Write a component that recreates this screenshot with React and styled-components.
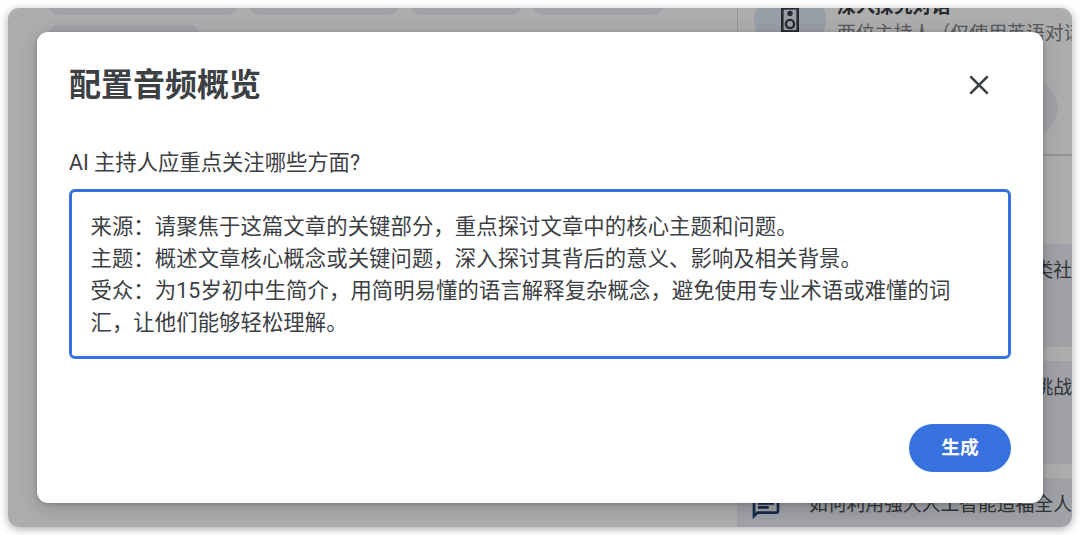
import React from "react";
import styled, { createGlobalStyle } from "styled-components";

const Global = createGlobalStyle`
  * { box-sizing: border-box; }
  body {
    margin: 0;
    background: #fff;
    font-family: Roboto, "Noto Sans CJK SC", sans-serif;
    color: #3c4043;
  }
`;

const Stage = styled.div`
  width: 1080px;
  height: 535px;
  padding: 8px;
  overflow: hidden;
`;

const Frame = styled.div`
  position: relative;
  width: 1064px;
  height: 519px;
  border-radius: 11px;
  box-shadow: 0 2px 9px rgba(0, 0, 0, 0.34);
`;

const Page = styled.div`
  display: flex;
  height: 100%;
  overflow: hidden;
  border-radius: 11px;
  background: #fff;
`;

const Main = styled.main`
  width: 729px;
  flex: none;
  padding-left: 40px;
  overflow: hidden;
`;

const ChipRow = styled.div`
  display: flex;
  gap: 11px;
  height: 43px;
  margin-top: ${(p) => p.$offset}px;
`;

const Chip = styled.div`
  width: ${(p) => p.$width}px;
  border-radius: 11px;
  background: #edeff7;
`;

const Side = styled.aside`
  width: 335px;
  flex: none;
  overflow: hidden;
  display: flex;
  flex-direction: column;
`;

const Audio = styled.section`
  height: 148px;
  flex: none;
  border-left: 1px solid #dadce0;
  border-bottom: 2px solid #dadce0;
`;

const AudioHead = styled.div`
  display: flex;
  gap: 11px;
  height: 72px;
  margin: -24px 0 0 16px;
`;

const Round = styled.div`
  display: flex;
  align-items: center;
  justify-content: center;
  width: 72px;
  height: 72px;
  flex: none;
  border-radius: 50%;
  background: #e1e9f8;
`;

const AudioText = styled.div`
  padding-top: 10px;
  white-space: nowrap;
  font-size: 18.9px;
  line-height: 26px;
`;

const AudioTitle = styled.div`
  font-weight: 700;
  color: #3c4043;
`;

const AudioNote = styled.div`
  padding-top: 1px;
  color: #80868b;
`;

const AudioAction = styled.div`
  width: 290px;
  height: 56px;
  margin: 24px 0 0 30px;
  border-radius: 28px;
  background: #edeff7;
`;

const Notes = styled.div`
  display: flex;
  flex-direction: column;
  gap: 13.5px;
  padding-top: 87.5px;
`;

const Note = styled.div`
  display: flex;
  justify-content: ${(p) => (p.$end ? "flex-end" : "flex-start")};
  gap: 27px;
  height: 103.5px;
  flex: none;
  padding: 14px 0 0 ${(p) => (p.$end ? 0 : 13)}px;
  background: #edeff7;
  white-space: nowrap;
  font-size: 18.8px;
  line-height: 27px;
  color: #4a4e52;

  svg {
    flex: none;
    margin-top: -2px;
  }
`;

const Scrim = styled.div`
  position: absolute;
  inset: 0;
  overflow: hidden;
  border-radius: 11px;
  background: rgba(0, 0, 0, 0.32);
`;

const Dialog = styled.section`
  position: absolute;
  left: 29px;
  top: 24px;
  width: 1006px;
  height: 471px;
  padding: 32px;
  display: flex;
  flex-direction: column;
  border-radius: 11px;
  background: #fff;
  box-shadow: 0 1px 4px rgba(0, 10, 8, 0.2), 0 5px 20px rgba(0, 10, 8, 0.18);
`;

const Header = styled.header`
  display: flex;
  align-items: center;
  justify-content: space-between;
  height: 43px;
  padding-right: 16px;
`;

const Title = styled.h1`
  margin: 0;
  font-size: 32px;
  line-height: 43px;
  font-weight: 700;
`;

const Close = styled.button`
  display: flex;
  margin-bottom: 1px;
  padding: 0;
  border: 0;
  background: none;
  color: #3c4043;
`;

const Label = styled.label`
  margin-top: 40px;
  font-size: 21.33px;
  line-height: 32px;
`;

const Field = styled.div`
  height: 170px;
  margin-top: 10px;
  padding: 19px 18.5px;
  border: 3px solid #3871e0;
  border-radius: 6px;
  font-size: 21.33px;
  line-height: 32px;
  letter-spacing: 0.1px;
  white-space: nowrap;
`;

const Footer = styled.footer`
  display: flex;
  justify-content: flex-end;
  margin-top: 65px;
`;

const Submit = styled.button`
  width: 102px;
  height: 48px;
  padding: 0;
  border: 0;
  border-radius: 24px;
  background: #3871e0;
  color: #fff;
  font: 700 18.67px/48px Roboto, "Noto Sans CJK SC", sans-serif;
`;

const SpeakerIcon = () => (
  <svg width="18" height="26" viewBox="0 0 18 26" fill="none" stroke="#3c4043">
    <rect x="1.3" y="1.3" width="15.4" height="23.2" strokeWidth="2.6" />
    <circle cx="9" cy="6.5" r="2.7" fill="#3c4043" stroke="none" />
    <circle cx="9" cy="17" r="4.1" strokeWidth="2.4" />
  </svg>
);

const ChatIcon = () => (
  <svg width="32" height="32" viewBox="0 0 24 24" fill="#1f3e72">
    <path d="M4 4h16v12H5.17L4 17.17V4m0-2c-1.1 0-1.99.9-1.99 2L2 22l4-4h14c1.1 0 2-.9 2-2V4c0-1.1-.9-2-2-2H4zm2 10h8v2H6v-2zm0-3h12v2H6V9zm0-3h12v2H6V6z" />
  </svg>
);

const CloseIcon = () => (
  <svg width="32" height="32" viewBox="0 0 32 32" fill="none" stroke="currentColor" strokeWidth="2.6">
    <path d="M7.3 7.3 24.7 24.7M24.7 7.3 7.3 24.7" />
  </svg>
);

const prompt = [
  "来源：请聚焦于这篇文章的关键部分，重点探讨文章中的核心主题和问题。",
  "主题：概述文章核心概念或关键问题，深入探讨其背后的意义、影响及相关背景。",
  "受众：为15岁初中生简介，用简明易懂的语言解释复杂概念，避免使用专业术语或难懂的词",
  "汇，让他们能够轻松理解。",
];

export default function App() {
  return (
    <Stage lang="zh-CN">
      <Global />
      <Frame>
        <Page>
          <Main>
            <ChipRow $offset={-36}>
              <Chip $width={190} />
              <Chip $width={150} />
              <Chip $width={112} />
              <Chip $width={131} />
            </ChipRow>
            <ChipRow $offset={10}>
              <Chip $width={152} />
            </ChipRow>
          </Main>
          <Side>
            <Audio>
              <AudioHead>
                <Round>
                  <SpeakerIcon />
                </Round>
                <AudioText>
                  <AudioTitle>深入探究对话</AudioTitle>
                  <AudioNote>两位主持人（仅使用英语对话）</AudioNote>
                </AudioText>
              </AudioHead>
              <AudioAction />
            </Audio>
            <Notes>
              <Note $end>类社</Note>
              <Note $end>挑战</Note>
              <Note>
                <ChatIcon />
                如何利用强大人工智能造福全人类
              </Note>
            </Notes>
          </Side>
        </Page>
        <Scrim>
          <Dialog>
            <Header>
              <Title>配置音频概览</Title>
              <Close aria-label="关闭">
                <CloseIcon />
              </Close>
            </Header>
            <Label>AI 主持人应重点关注哪些方面?</Label>
            <Field>
              {prompt.map((line) => (
                <div key={line}>{line}</div>
              ))}
            </Field>
            <Footer>
              <Submit>生成</Submit>
            </Footer>
          </Dialog>
        </Scrim>
      </Frame>
    </Stage>
  );
}
